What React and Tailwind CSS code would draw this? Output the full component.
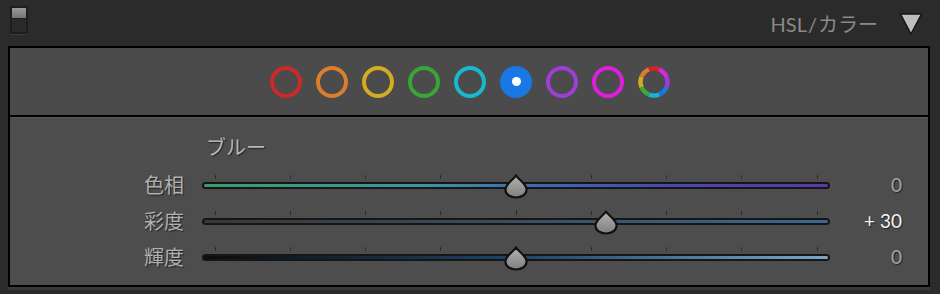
import React from "react";

const FONT = { fontFamily: 'Lato, "Noto Sans CJK JP", sans-serif' };

const swatches = [
  "#cc2929",
  "#d97f2e",
  "#d4ac22",
  "#3aa33a",
  "#1ab8cc",
  "#1a78e6",
  "#9d3fd6",
  "#dd1fdd",
];

const ringColors = ["#d42626", "#e61fe0", "#9a3cdc", "#1a78e6", "#16b4d2", "#3aa83a", "#d4ac22", "#dc7c2c"];

// 全色リング（8分割）
function AllColors() {
  const r = 13.5;
  const c = 16;
  const arc = (i) => {
    const a0 = ((i * 45 - 22.5 - 90) * Math.PI) / 180;
    const a1 = ((i * 45 + 22.5 - 90) * Math.PI) / 180;
    return `M${c + r * Math.cos(a0)} ${c + r * Math.sin(a0)} A${r} ${r} 0 0 1 ${c + r * Math.cos(a1)} ${c + r * Math.sin(a1)}`;
  };
  return (
    <svg width="32" height="32" viewBox="0 0 32 32">
      {ringColors.map((col, i) => (
        <path key={i} d={arc(i)} stroke={col} strokeWidth="4.5" fill="none" />
      ))}
    </svg>
  );
}

function Thumb() {
  return (
    <svg width="26" height="25" viewBox="0 0 26 25">
      <defs>
        <linearGradient id="tg" x1="0" y1="0" x2="0" y2="1">
          <stop offset="0" stopColor="#b4b4b4" />
          <stop offset="1" stopColor="#7e7e7e" />
        </linearGradient>
      </defs>
      <path
        d="M13 1.5 C15.5 5.5 23 9.5 23.5 15 C24 20 19 23.5 13 23.5 C7 23.5 2 20 2.5 15 C3 9.5 10.5 5.5 13 1.5 Z"
        fill="url(#tg)"
        stroke="#111"
        strokeWidth="2.2"
        strokeLinejoin="round"
      />
    </svg>
  );
}

const rows = [
  {
    label: "色相",
    value: 0,
    track: "bg-[linear-gradient(to_right,#3a9c6c,#3a96a2_35%,#3c6cb0_52%,#4848b0_75%,#5a38a8)]",
  },
  {
    label: "彩度",
    value: 30,
    track: "bg-[linear-gradient(to_right,#383838,#3a4c5c_45%,#3a6890)]",
  },
  {
    label: "輝度",
    value: 0,
    track: "bg-[linear-gradient(to_right,#0c0c0c,#1c4468_50%,#7aa6c8)]",
  },
];

const ticks = [0, 1, 2, 3, 4, 5, 6, 7, 8];

export default function App() {
  return (
    <div className="w-[940px] h-[294px] bg-[#2b2b2b] overflow-hidden" style={FONT}>
      {/* ヘッダー */}
      <div className="h-[46px] flex justify-between items-start">
        <div className="ml-[10px] mt-[6px] w-[18px] h-[28px] bg-[#1e1e1e] p-[2px] flex flex-col shadow-[0_1px_0_#3a3a3a]">
          <div className="h-[10px] bg-[linear-gradient(#9a9a9a,#747474)]" />
          <div className="flex-1 bg-[#2a2a2a] mt-[1px]" />
        </div>
        <div className="flex items-center mr-[17px] mt-[12px] gap-[21px]">
          <span className="text-[20px] leading-[18px] text-[#8a8a8a]">
            HSL<span className="mx-[1px]">/</span>カラー
          </span>
          <svg width="24" height="24" viewBox="0 0 24 24">
            <path d="M1.5 2 L22.5 2 L12 22 Z" fill="#bdbdbd" stroke="#151515" strokeWidth="1.5" strokeLinejoin="round" />
          </svg>
        </div>
      </div>

      {/* パネル */}
      <div className="ml-[8px] w-[922px] h-[241px] border-2 border-black shadow-[0_3px_0_#393939] flex flex-col">
        <div className="h-[67px] bg-[#4b4b4b] flex items-center justify-center gap-[14px] pl-[2px]">
          {swatches.map((c, i) =>
            i === 5 ? (
              <div key={i} className="w-[32px] h-[32px] rounded-full flex items-center justify-center" style={{ backgroundColor: c }}>
                <div className="w-[9px] h-[9px] rounded-full bg-white" />
              </div>
            ) : (
              <div key={i} className="w-[32px] h-[32px] rounded-full border-[4.5px]" style={{ borderColor: c }} />
            )
          )}
          <AllColors />
        </div>
        <div className="h-[2px] bg-black" />
        <div className="h-[168px] bg-[#4d4d4d] border-t border-[#5a5a5a]">
          <div className="h-[49px] pl-[196px] pt-[17px] text-[20px] leading-[24px] text-[#b6b6b6] [text-shadow:1px_1px_1px_#222]">
            ブルー
          </div>
          {rows.map((r) => (
            <div key={r.label} className="h-[36px] grid grid-cols-[192px_628px_72px] items-center">
              <div className="text-right pr-[18px] text-[20px] leading-[24px] text-[#b0b0b0] [text-shadow:1px_1px_1px_#222]">
                {r.label}
              </div>
              <div className="relative h-full flex flex-col pt-[7px]">
                <div className="h-[5px] flex justify-between px-[12.5px]">
                  {ticks.map((t) => (
                    <div key={t} className={t === 4 ? "w-[1px] h-[5px] bg-[#262626]" : "w-[1px] h-[4px] mt-[1px] bg-[#2c2c2c]"} />
                  ))}
                </div>
                <div className={`mt-[3px] h-[7px] rounded-full border-2 border-[#161616] ${r.track}`} />
                <div className="absolute top-[7px] -ml-[13px]" style={{ left: 314 + r.value * 3 }}>
                  <Thumb />
                </div>
              </div>
              <div
                className={`text-right text-[19px] leading-[24px] [text-shadow:1px_1px_1px_#222] ${
                  r.value ? "text-[#f2f2f2]" : "text-[#a4a4a4]"
                }`}
              >
                {r.value ? `+ ${r.value}` : "0"}
              </div>
            </div>
          ))}
        </div>
      </div>
    </div>
  );
}
